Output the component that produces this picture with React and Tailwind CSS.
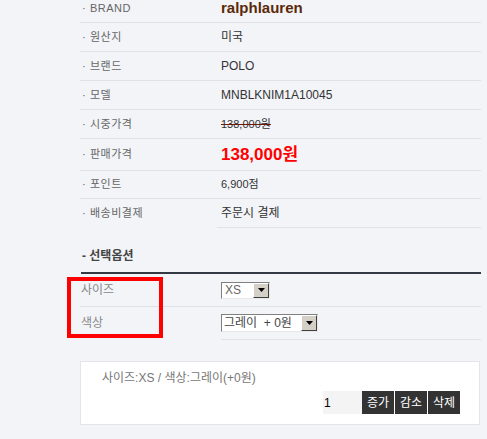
import React from "react";

function Arrow() {
  return (
    <div className="flex h-full w-[16px] items-center justify-center border border-t-white border-l-white border-b-[#404040] border-r-[#404040] bg-[#d4d0c8]">
      <svg width="7" height="4" viewBox="0 0 7 4">
        <polygon points="0,0 7,0 3.5,4" fill="#000" />
      </svg>
    </div>
  );
}

function Row({ label, children, h = "h-[29px]", last = false }) {
  return (
    <div className={`flex ${h} items-center ${last ? "" : "border-b border-[#dde1e8]"}`}>
      <div className="flex w-[137px] pl-[2px] text-[11px] text-[#666] tracking-[0.5px]">
        <span className="w-[8px]">·</span>
        <span>{label}</span>
      </div>
      <div className={`flex h-full flex-1 items-center pl-[4px] ${last ? "border-b border-[#dde1e8]" : ""}`}>{children}</div>
    </div>
  );
}

export default function App() {
  return (
    <div className="h-[439px] w-[487px] overflow-hidden bg-[#f2f4f8] font-['Liberation_Sans','Noto_Sans_CJK_KR',sans-serif]">
      <div className="ml-[80px] mt-[-6px] w-[401px]">
        <Row label="BRAND">
          <span className="text-[15px] font-bold text-[#5a2a08]">ralphlauren</span>
        </Row>
        <Row label="원산지">
          <span className="text-[12px] text-[#333]">미국</span>
        </Row>
        <Row label="브랜드">
          <span className="text-[12px] text-[#333]">POLO</span>
        </Row>
        <Row label="모델">
          <span className="text-[12px] text-[#333]">MNBLKNIM1A10045</span>
        </Row>
        <Row label="시중가격">
          <span className="text-[11px] text-[#333] line-through decoration-[#6a1a05]">138,000원</span>
        </Row>
        <Row label="판매가격" h="h-[32px]">
          <span className="text-[17px] font-bold text-[#ff0000]">138,000원</span>
        </Row>
        <Row label="포인트" h="h-[28px]">
          <span className="text-[11px] text-[#333]">6,900점</span>
        </Row>
        <Row label="배송비결제" last>
          <span className="text-[12px] text-[#333]">주문시 결제</span>
        </Row>

        <div className="h-[44px] pt-[20px] pb-[8px] pl-[2px]">
          <div className="text-[12px] font-bold leading-[16px] text-[#444]">- 선택옵션</div>
        </div>
        <div className="ml-[1px] h-[2px] bg-[#333a44]" />

        <div className="relative">
          <div className="flex h-[33px] items-center border-b border-[#dde1e8]">
            <div className="w-[141px] pl-[1px] text-[12px] text-[#888]">사이즈</div>
            <div className="flex h-[17px] w-[49px] items-stretch border border-t-[#808080] border-l-[#808080] border-b-[#e8e8e8] border-r-[#e8e8e8] bg-white">
              <div className="flex flex-1 items-center pl-[3px] text-[12px] text-[#666]">XS</div>
              <Arrow />
            </div>
          </div>
          <div className="flex h-[33px]">
            <div className="w-[141px] pl-[1px] pt-[7px] text-[12px] text-[#888]">색상</div>
            <div className="flex flex-1 items-center border-b border-[#dde1e8]">
              <div className="flex h-[18px] w-[97px] items-stretch border border-t-[#808080] border-l-[#808080] border-b-[#e8e8e8] border-r-[#e8e8e8] bg-white">
                <div className="flex flex-1 items-center whitespace-pre pl-[2px] text-[12px] text-[#444]">그레이  + 0원</div>
                <Arrow />
              </div>
            </div>
          </div>
          <div className="absolute left-[-13px] top-[3px] h-[61px] w-[96px] border-4 border-[#ff0000]" />
        </div>

        <div className="mt-[21px] w-[400px] border border-[#e3e5ea] bg-white pl-[21px] pr-[19px] pt-[8px] pb-[10px]">
          <div className="text-[12px] leading-[16px] text-[#777]">사이즈:XS / 색상:그레이(+0원)</div>
          <div className="mt-[5px] flex justify-end">
            <div className="flex h-[23px] w-[39px] items-center bg-[#f4f4f4] pl-[1px] text-[12px] text-black">1</div>
            <div className="flex h-[23px] w-[32px] items-center justify-center bg-[#333] text-[12px] text-white">증가</div>
            <div className="ml-[1px] flex h-[23px] w-[32px] items-center justify-center bg-[#333] text-[12px] text-white">감소</div>
            <div className="ml-[1px] flex h-[23px] w-[32px] items-center justify-center bg-[#333] text-[12px] text-white">삭제</div>
          </div>
        </div>
      </div>
    </div>
  );
}
